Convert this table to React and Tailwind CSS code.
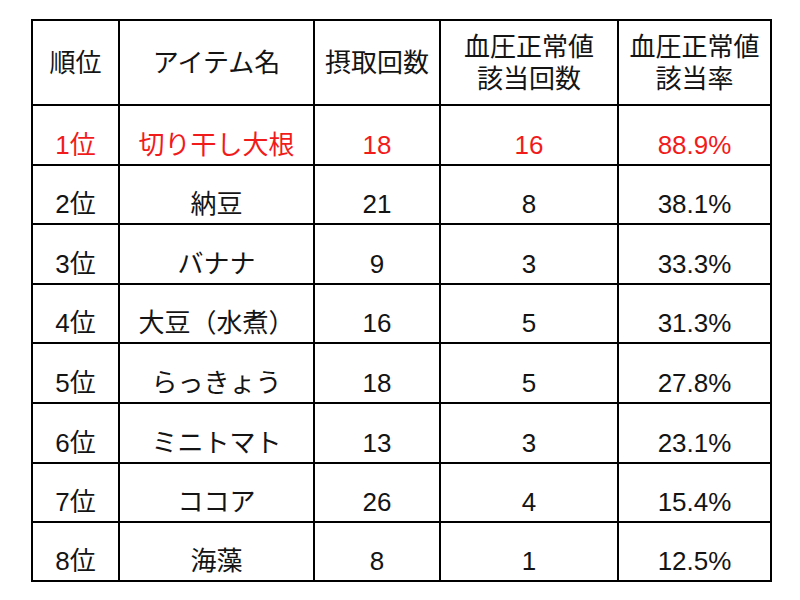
import React from "react";

const rows = [
  { rank: "1位", name: "切り干し大根", count: "18", hit: "16", rate: "88.9%", top: true },
  { rank: "2位", name: "納豆", count: "21", hit: "8", rate: "38.1%" },
  { rank: "3位", name: "バナナ", count: "9", hit: "3", rate: "33.3%" },
  { rank: "4位", name: "大豆（水煮）", count: "16", hit: "5", rate: "31.3%" },
  { rank: "5位", name: "らっきょう", count: "18", hit: "5", rate: "27.8%" },
  { rank: "6位", name: "ミニトマト", count: "13", hit: "3", rate: "23.1%" },
  { rank: "7位", name: "ココア", count: "26", hit: "4", rate: "15.4%" },
  { rank: "8位", name: "海藻", count: "8", hit: "1", rate: "12.5%" },
];

// 行ごとの高さ（罫線込み）
const heights = ["h-[60px]", "h-[59px]", "h-[60px]", "h-[59px]", "h-[60px]", "h-[60px]", "h-[59px]", "h-[59px]"];

const Head = ({ children }) => (
  <div className="h-[85px] border-r-2 border-b-2 border-black flex items-center justify-center text-center leading-[32px]">
    <div>{children}</div>
  </div>
);

const Cell = ({ h, red, children }) => (
  <div
    className={
      h +
      " border-r-2 border-b-2 border-black flex items-end justify-center pb-[6px] leading-[26px] whitespace-nowrap " +
      (red ? "text-[#f21b1b]" : "text-[#141414]")
    }
  >
    {children}
  </div>
);

export default function App() {
  return (
    <div
      className="w-[800px] h-[600px] bg-white pt-[19px] pl-[31px] text-[26px]"
      style={{ fontFamily: '"Liberation Sans", "Noto Sans CJK JP", sans-serif' }}
    >
      <div className="grid grid-cols-[87px_195px_126px_178px_153px] w-[741px] border-t-2 border-l-2 border-black text-[#141414]">
        {/* === Header === */}
        <Head>順位</Head>
        <Head>アイテム名</Head>
        <Head>摂取回数</Head>
        <Head>
          血圧正常値
          <br />
          該当回数
        </Head>
        <Head>
          血圧正常値
          <br />
          該当率
        </Head>

        {/* === Rows === */}
        {rows.map((r, i) => (
          <React.Fragment key={r.rank}>
            <Cell h={heights[i]} red={r.top}>{r.rank}</Cell>
            <Cell h={heights[i]} red={r.top}>{r.name}</Cell>
            <Cell h={heights[i]} red={r.top}>{r.count}</Cell>
            <Cell h={heights[i]} red={r.top}>{r.hit}</Cell>
            <Cell h={heights[i]} red={r.top}>{r.rate}</Cell>
          </React.Fragment>
        ))}
      </div>
    </div>
  );
}
